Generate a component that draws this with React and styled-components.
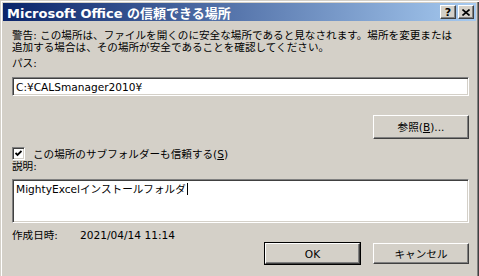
import styled, { createGlobalStyle, css } from "styled-components"

const GlobalStyle = createGlobalStyle`
  html, body {
    margin: 0;
    overflow: hidden;
    background: #d4d0c8;
  }
  body {
    font-family: "DejaVu Sans", "Noto Sans CJK JP", sans-serif;
    color: #000;
  }
`

const raised = css`
  background: #d4d0c8;
  border: 1px solid;
  border-color: #fff #404040 #404040 #fff;
  box-shadow: inset -1px -1px #808080, inset 1px 1px #d4d0c8;
`

const sunken = css`
  background: #fff;
  border: 1px solid;
  border-color: #808080 #fff #fff #808080;
  box-shadow: inset 1px 1px #404040, inset -1px -1px #d4d0c8;
`

const Window = styled.div`
  width: 479px;
  height: 280px;
  box-sizing: border-box;
  padding: 3px;
  background: #d4d0c8;
  box-shadow: inset 1px 1px #d4d0c8, inset 2px 2px #fff, inset -1px -1px #404040,
    inset -2px -2px #808080;
  display: flex;
  flex-direction: column;
`

const TitleBar = styled.div`
  height: 18px;
  display: flex;
  align-items: center;
  padding: 0 2px 0 4px;
  background: linear-gradient(to right, #0a246a, #a6caf0);
  color: #fff;
  font-weight: bold;
  font-size: 13px;
  white-space: nowrap;
`

const TitleButtons = styled.div`
  margin-left: auto;
  display: flex;
  gap: 2px;
`

const TitleButton = styled.div`
  ${raised};
  width: 16px;
  height: 14px;
  box-sizing: border-box;
  display: flex;
  align-items: center;
  justify-content: center;
  color: #000;
  font-size: 11px;
  font-weight: bold;
  line-height: 1;
`

const Body = styled.div`
  display: flex;
  flex-direction: column;
  padding: 0 7px 0 9px;
  font-size: 10.6px;
  line-height: 12px;
`

const Warning = styled.p`
  margin: 8px 0 0;
  white-space: nowrap;
`

const Label = styled.div`
  margin-top: ${(p) => p.$top || 0}px;
  height: 12px;
`

const Field = styled.div`
  ${sunken};
  box-sizing: border-box;
  margin-top: ${(p) => p.$top || 0}px;
  height: ${(p) => p.$height}px;
  padding: ${(p) => (p.$multi ? "3px 3px" : "2px 3px")};
  white-space: nowrap;
  display: flex;
  align-items: ${(p) => (p.$multi ? "flex-start" : "center")};
`

const Caret = styled.span`
  display: inline-block;
  width: 1px;
  height: 12px;
  background: #000;
  margin-left: 1px;
`

const Button = styled.div`
  ${raised};
  box-sizing: border-box;
  width: ${(p) => p.$width || 96}px;
  height: ${(p) => p.$height || 21}px;
  display: flex;
  align-items: center;
  justify-content: center;
  font-size: 10.6px;
  ${(p) =>
    p.$default &&
    css`
      outline: 1px solid #000;
    `}
`

const BrowseRow = styled.div`
  margin-top: 19px;
  display: flex;
  justify-content: flex-end;
`

const CheckRow = styled.div`
  margin-top: 8px;
  display: flex;
  align-items: center;
  gap: 8px;
  height: 13px;
`

const CheckBox = styled.div`
  ${sunken};
  box-sizing: border-box;
  width: 13px;
  height: 13px;
  display: flex;
  align-items: center;
  justify-content: center;
`

const Footer = styled.div`
  margin-top: 6px;
  display: flex;
  align-items: flex-start;
`

const DateInfo = styled.div`
  display: flex;
  white-space: nowrap;
`

const DateLabel = styled.span`
  width: 68px;
`

const Buttons = styled.div`
  margin-left: auto;
  margin-top: 14px;
  display: flex;
  gap: 13px;
`

export default function App() {
  return (
    <>
      <GlobalStyle />
      <Window>
        <TitleBar>
          Microsoft Office の信頼できる場所
          <TitleButtons>
            <TitleButton>?</TitleButton>
            <TitleButton>
              <svg width="8" height="7" viewBox="0 0 8 7">
                <path d="M0.5 0.5 L7.5 6.5 M7.5 0.5 L0.5 6.5" stroke="#000" strokeWidth="1.6" />
              </svg>
            </TitleButton>
          </TitleButtons>
        </TitleBar>
        <Body>
          <Warning>
            警告: この場所は、ファイルを開くのに安全な場所であると見なされます。場所を変更または
            <br />
            追加する場合は、その場所が安全であることを確認してください。
          </Warning>
          <Label $top={4}>パス:</Label>
          <Field $top={8} $height={19}>
            C:¥CALSmanager2010¥
          </Field>
          <BrowseRow>
            <Button $height={24}>
              参照(<u>B</u>)...
            </Button>
          </BrowseRow>
          <CheckRow>
            <CheckBox>
              <svg width="7" height="7" viewBox="0 0 7 7">
                <path d="M0.5 3 L2.5 5 L6.5 1" stroke="#000" strokeWidth="1.8" fill="none" />
              </svg>
            </CheckBox>
            <span>
              この場所のサブフォルダーも信頼する(<u>S</u>)
            </span>
          </CheckRow>
          <Label>説明:</Label>
          <Field $top={7} $height={44} $multi>
            MightyExcelインストールフォルダ
            <Caret />
          </Field>
          <Footer>
            <DateInfo>
              <DateLabel>作成日時:</DateLabel>
              <span>2021/04/14 11:14</span>
            </DateInfo>
            <Buttons>
              <Button $width={95} $default>
                OK
              </Button>
              <Button>キャンセル</Button>
            </Buttons>
          </Footer>
        </Body>
      </Window>
    </>
  )
}
